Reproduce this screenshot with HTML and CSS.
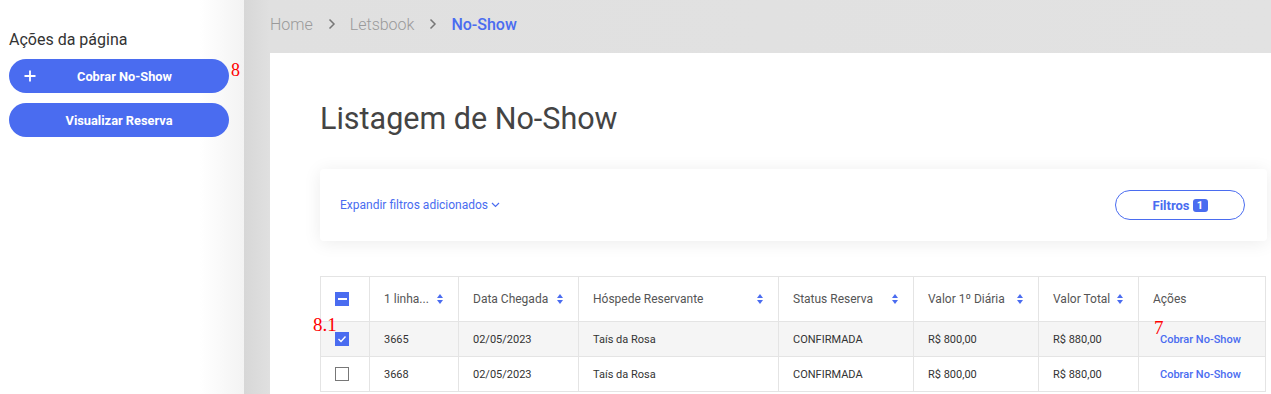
FILE: index.html
```html
<!DOCTYPE html>
<html lang="pt-BR">
<head>
<meta charset="utf-8">
<title>Listagem de No-Show</title>
<link rel="stylesheet" href="styles.css">
</head>
<body>
<div class="app">
  <aside class="sidebar">
    <h2 class="side-title">Ações da página</h2>
    <div class="side-actions">
      <button class="side-btn with-icon">
        <svg class="plus" width="12" height="12" viewBox="0 0 12 12"><path d="M6 0.5v11M0.5 6h11" stroke="#fff" stroke-width="1.8" fill="none"/></svg>
        <span>Cobrar No-Show</span>
        <span class="note note-8">8</span>
      </button>
      <button class="side-btn"><span>Visualizar Reserva</span></button>
    </div>
  </aside>
  <main class="main">
    <nav class="crumbs">
      <span class="crumb">Home</span>
      <svg class="sep" width="8" height="12" viewBox="0 0 8 12"><path d="M1.5 1.5l4.5 4.5-4.5 4.5" stroke="#777" stroke-width="1.5" fill="none"/></svg>
      <span class="crumb">Letsbook</span>
      <svg class="sep" width="8" height="12" viewBox="0 0 8 12"><path d="M1.5 1.5l4.5 4.5-4.5 4.5" stroke="#777" stroke-width="1.5" fill="none"/></svg>
      <span class="crumb current">No-Show</span>
    </nav>
    <section class="card">
      <h1 class="page-title">Listagem de No-Show</h1>
      <div class="filters">
        <a class="expand">Expandir filtros adicionados
          <svg width="9" height="6" viewBox="0 0 9 6"><path d="M1 1l3.5 3.5L8 1" stroke="#4a6cf0" stroke-width="1.2" fill="none"/></svg>
        </a>
        <button class="filter-btn">Filtros <span class="badge">1</span></button>
      </div>
      <table class="grid">
        <colgroup>
          <col class="c-check"><col class="c-id"><col class="c-date"><col class="c-guest"><col class="c-status"><col class="c-val1"><col class="c-total"><col class="c-act">
        </colgroup>
        <thead>
          <tr>
            <th class="check-cell"><span class="cb cb-on"><span class="dash"></span></span><span class="note note-81">8.1</span></th>
            <th><div class="th"><span>1 linha...</span><span class="sort"></span></div></th>
            <th><div class="th"><span>Data Chegada</span><span class="sort"></span></div></th>
            <th><div class="th"><span>Hóspede Reservante</span><span class="sort"></span></div></th>
            <th><div class="th"><span>Status Reserva</span><span class="sort"></span></div></th>
            <th><div class="th"><span>Valor 1º Diária</span><span class="sort"></span></div></th>
            <th><div class="th"><span>Valor Total</span><span class="sort"></span></div></th>
            <th><div class="th"><span>Ações</span></div></th>
          </tr>
        </thead>
        <tbody>
          <tr class="alt">
            <td class="check-cell"><span class="cb cb-on"><svg width="10" height="8" viewBox="0 0 10 8"><path d="M1.5 4l2.5 2.5L8.5 1.5" stroke="#fff" stroke-width="1.4" fill="none"/></svg></span></td>
            <td>3665</td><td>02/05/2023</td><td>Taís da Rosa</td><td>CONFIRMADA</td><td>R$ 800,00</td><td>R$ 880,00</td>
            <td class="act"><span class="note note-7">7</span><a class="link">Cobrar No-Show</a></td>
          </tr>
          <tr>
            <td class="check-cell"><span class="cb"></span></td>
            <td>3668</td><td>02/05/2023</td><td>Taís da Rosa</td><td>CONFIRMADA</td><td>R$ 800,00</td><td>R$ 880,00</td>
            <td class="act"><a class="link">Cobrar No-Show</a></td>
          </tr>
        </tbody>
      </table>
    </section>
  </main>
</div>
</body>
</html>
```
FILE: styles.css
```css
* { box-sizing: border-box; }
html, body { margin: 0; padding: 0; }
body {
  font-family: Roboto, "Liberation Sans", Arial, sans-serif;
  width: 1271px;
  height: 394px;
  overflow: hidden;
  background: #fff;
  color: #333;
}
.app { display: flex; height: 394px; overflow: hidden; }

.sidebar {
  width: 244px;
  flex: 0 0 244px;
  padding: 30px 15px 0 9px;
  background: linear-gradient(to right, #fff 0, #fff 200px, #f3f3f3 244px);
}
.side-title {
  margin: 0 0 10px;
  font-size: 16px;
  font-weight: 400;
  color: #333;
  line-height: 19px;
}
.side-actions { display: flex; flex-direction: column; gap: 10px; }
.side-btn {
  position: relative;
  width: 220px;
  height: 34px;
  border: 0;
  border-radius: 17px;
  background: #4a6cf0;
  color: #fff;
  font-family: inherit;
  font-size: 12.8px;
  font-weight: 700;
  display: flex;
  align-items: center;
  justify-content: center;
  padding: 0;
}
.side-btn.with-icon { padding-left: 11px; }
.side-btn .plus { position: absolute; left: 15px; top: 11px; }
.note {
  position: absolute;
  font-family: "Liberation Serif", "Times New Roman", serif;
  color: #f00;
  font-weight: 400;
  line-height: 1;
  white-space: nowrap;
  z-index: 2;
}
.note-8 { left: 222px; top: 2px; font-size: 18px; }
.note-81 { left: -8px; top: 38px; font-size: 19px; }
.note-7 { left: 15px; top: -4px; font-size: 19px; }

.main {
  flex: 1;
  display: flex;
  flex-direction: column;
  padding-left: 26px;
  background: linear-gradient(to right, #d7d7d7 0, #e0e0e0 26px, #e2e2e2 100%);
}
.crumbs {
  flex: 0 0 53px;
  height: 53px;
  display: flex;
  align-items: center;
  padding-bottom: 5px;
  font-size: 16px;
}
.crumb { color: #9a9a9a; font-weight: 300; }
.crumb.current { color: #4a6cf0; font-weight: 500; }
.sep { margin: 0 14px 0 15px; }

.card {
  flex: 1 0 auto;
  background: #fff;
  padding: 47px 4px 0 50px;
}
.page-title {
  margin: 0;
  font-size: 30.5px;
  font-weight: 400;
  color: #444;
  line-height: 38px;
}
.filters {
  margin-top: 31px;
  height: 72px;
  background: #fff;
  border-radius: 4px;
  box-shadow: 0 2px 18px rgba(0,0,0,0.08);
  display: flex;
  align-items: center;
  justify-content: space-between;
  padding: 0 22px 0 20px;
}
.expand {
  color: #4a6cf0;
  font-size: 12px;
  display: flex;
  align-items: center;
  gap: 3px;
}
.filter-btn {
  width: 130px;
  height: 30px;
  border: 1px solid #4a6cf0;
  border-radius: 15px;
  background: #fff;
  color: #4a6cf0;
  font-family: inherit;
  font-size: 13px;
  font-weight: 700;
  display: flex;
  align-items: center;
  justify-content: center;
  gap: 3px;
  padding: 0;
}
.badge {
  background: #4a6cf0;
  color: #fff;
  font-size: 11px;
  font-weight: 700;
  border-radius: 3px;
  width: 15px;
  height: 13px;
  line-height: 13px;
  text-align: center;
}

.grid {
  margin-top: 35px;
  width: 945px;
  border-collapse: collapse;
  table-layout: fixed;
  font-size: 11px;
  color: #333;
}
.c-check { width: 49px; }
.c-id { width: 89px; }
.c-date { width: 120px; }
.c-guest { width: 200px; }
.c-status { width: 135px; }
.c-val1 { width: 125px; }
.c-total { width: 100px; }
.c-act { width: 127px; }
.grid th, .grid td {
  border: 1px solid #e4e4e4;
  padding: 0 14px;
  text-align: left;
}
.grid th {
  height: 45px;
  font-size: 12px;
  font-weight: 400;
  color: #555;
  background: #fff;
}
.grid td { height: 35px; }
.grid tr.alt td { background: #f5f5f5; }
.th { display: flex; align-items: center; justify-content: space-between; padding-right: 1px; }
.sort {
  width: 6px;
  height: 10px;
  position: relative;
  flex: 0 0 6px;
}
.sort::before, .sort::after {
  content: "";
  position: absolute;
  left: 0;
  border-left: 3px solid transparent;
  border-right: 3px solid transparent;
}
.sort::before { top: 0; border-bottom: 4px solid #4a6cf0; }
.sort::after { bottom: 0; border-top: 4px solid #4a6cf0; }

.check-cell { position: relative; padding: 0 0 0 14px !important; }
.cb {
  width: 14px;
  height: 14px;
  border: 1px solid #777;
  background: #fff;
  display: flex;
  align-items: center;
  justify-content: center;
}
.cb-on { background: #4a6cf0; border-color: #4a6cf0; }
.dash { width: 9px; height: 2px; background: #fff; }
.act { position: relative; padding-left: 21px !important; }
.link { color: #4a6cf0; font-weight: 500; font-size: 11px; }
```
